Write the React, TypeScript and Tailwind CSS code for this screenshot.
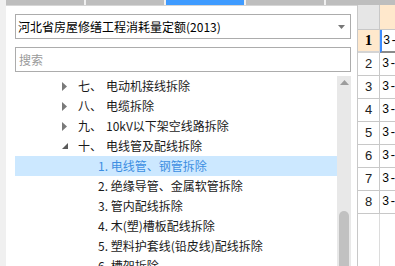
const TREE = [
  { kind: "group", num: "七、", title: "电动机接线拆除", open: false },
  { kind: "group", num: "八、", title: "电缆拆除", open: false },
  { kind: "group", num: "九、", title: "10kV以下架空线路拆除", open: false },
  { kind: "group", num: "十、", title: "电线管及配线拆除", open: true },
  { kind: "item", title: "1. 电线管、钢管拆除", selected: true },
  { kind: "item", title: "2. 绝缘导管、金属软管拆除" },
  { kind: "item", title: "3. 管内配线拆除" },
  { kind: "item", title: "4. 木(塑)槽板配线拆除" },
  { kind: "item", title: "5. 塑料护套线(铅皮线)配线拆除" },
  { kind: "item", title: "6. 槽架拆除" },
];

function TabStrip() {
  return (
    <div className="h-[5px] flex gap-[2px] pl-[6px] shrink-0">
      <div className="w-[78px] bg-[#bebebe]" />
      <div className="w-[78px] bg-[#bebebe]" />
      <div className="w-[78px] bg-[#3f9bff]" />
      <div className="w-[78px] bg-[#bebebe]" />
      <div className="flex-1 bg-[#bebebe]" />
    </div>
  );
}

function TreeRow({ row }: { row: (typeof TREE)[number] }) {
  if (row.kind === "group") {
    return (
      <div className="h-[20px] flex items-center pl-[47px] text-[12px] text-[#1a1a1a] whitespace-nowrap">
        <span className="w-[16px] flex items-center">
          {row.open ? (
            <svg width="6" height="6" viewBox="0 0 6 6">
              <path d="M6 0 L6 6 L0 6 Z" fill="#5a5a5a" />
            </svg>
          ) : (
            <svg width="5" height="9" viewBox="0 0 5 9">
              <path d="M0 0 L5 4.5 L0 9 Z" fill="#7a7a7a" />
            </svg>
          )}
        </span>
        <span className="w-[28px]">{row.num}</span>
        <span>{row.title}</span>
      </div>
    );
  }
  return (
    <div
      className={
        "h-[20px] flex items-center pl-[83px] text-[12px] whitespace-nowrap " +
        (row.selected ? "bg-[#cce8ff] text-[#3c8ee2]" : "text-[#1a1a1a]")
      }
    >
      {row.title}
    </div>
  );
}

function LeftPanel() {
  return (
    <div className="w-[351px] bg-white border-t border-[#d6d6d6] flex flex-col pt-[8px] pl-[9px] pr-[6px] shrink-0">
      <div className="h-[25px] border border-[#acacac] flex items-center pl-[2px] pr-[5px] shrink-0">
        <span className="flex-1 text-[12px] text-black whitespace-nowrap">河北省房屋修缮工程消耗量定额(2013)</span>
        <svg width="7" height="4" viewBox="0 0 7 4">
          <path d="M0 0 L7 0 L3.5 4 Z" fill="#777" />
        </svg>
      </div>
      <div className="h-[25px] mt-[8px] border border-[#acacac] flex items-center px-[3px] text-[12px] text-[#9a9a9a] shrink-0">
        搜索
      </div>
      <div className="mt-[4px] flex flex-1 min-h-0">
        <div className="flex-1 overflow-hidden">
          {TREE.map((row, i) => (
            <TreeRow key={i} row={row} />
          ))}
        </div>
        <div className="w-[14px] bg-[#e8e8e8] flex flex-col items-center">
          <svg className="mt-[4px]" width="9" height="5" viewBox="0 0 9 5">
            <path d="M0 5 L4.5 0 L9 5 Z" fill="#9c9c9c" />
          </svg>
          <div className="mt-[126px] w-[10px] flex-1 rounded-t-full bg-[#c1c1c1]" />
        </div>
      </div>
    </div>
  );
}

function Grid() {
  const rows = [2, 3, 4, 5, 6, 7, 8];
  return (
    <div className="flex-1 bg-white border-l border-[#c8c8c8] flex flex-col font-['Liberation_Mono',monospace] text-[12px] text-black overflow-hidden">
      <div className="h-[25px] flex border-b border-[#c8c8c8] shrink-0">
        <div className="w-[22px] bg-[#e6e6e6] border-r border-[#c8c8c8]" />
        <div className="flex-1 bg-[#ffe8cc]" />
      </div>
      <div className="h-[23px] flex shrink-0">
        <div className="w-[22px] bg-[#ffe8cc] border-r border-b-2 border-[#d4d4d4] flex items-center justify-center font-['Liberation_Serif',serif] font-bold text-[15px]">
          1
        </div>
        <div className="flex-1 border-l-2 border-l-[#3c8cff] border-b-2 border-b-[#8a8a8a] pl-[1px] flex items-center whitespace-nowrap overflow-hidden">
          3-1
        </div>
      </div>
      {rows.map((n) => (
        <div key={n} className="h-[23px] flex shrink-0 border-b border-[#c8c8c8]">
          <div className="w-[22px] border-r border-[#c8c8c8] flex items-center justify-center font-['Liberation_Sans',sans-serif] text-[13px] text-[#222]">
            {n}
          </div>
          <div className="flex-1 pl-[2px] flex items-center whitespace-nowrap overflow-hidden">3-1</div>
        </div>
      ))}
      <div className="flex-1 flex">
        <div className="w-[22px] border-r border-[#dcdcdc]" />
      </div>
    </div>
  );
}

export default function App() {
  return (
    <div className="w-[395px] h-[266px] overflow-hidden bg-[#f0f0f0] flex flex-col font-['Noto_Sans_CJK_SC',sans-serif]">
      <TabStrip />
      <div className="flex flex-1 min-h-0 pl-[6px]">
        <LeftPanel />
        <Grid />
      </div>
    </div>
  );
}
